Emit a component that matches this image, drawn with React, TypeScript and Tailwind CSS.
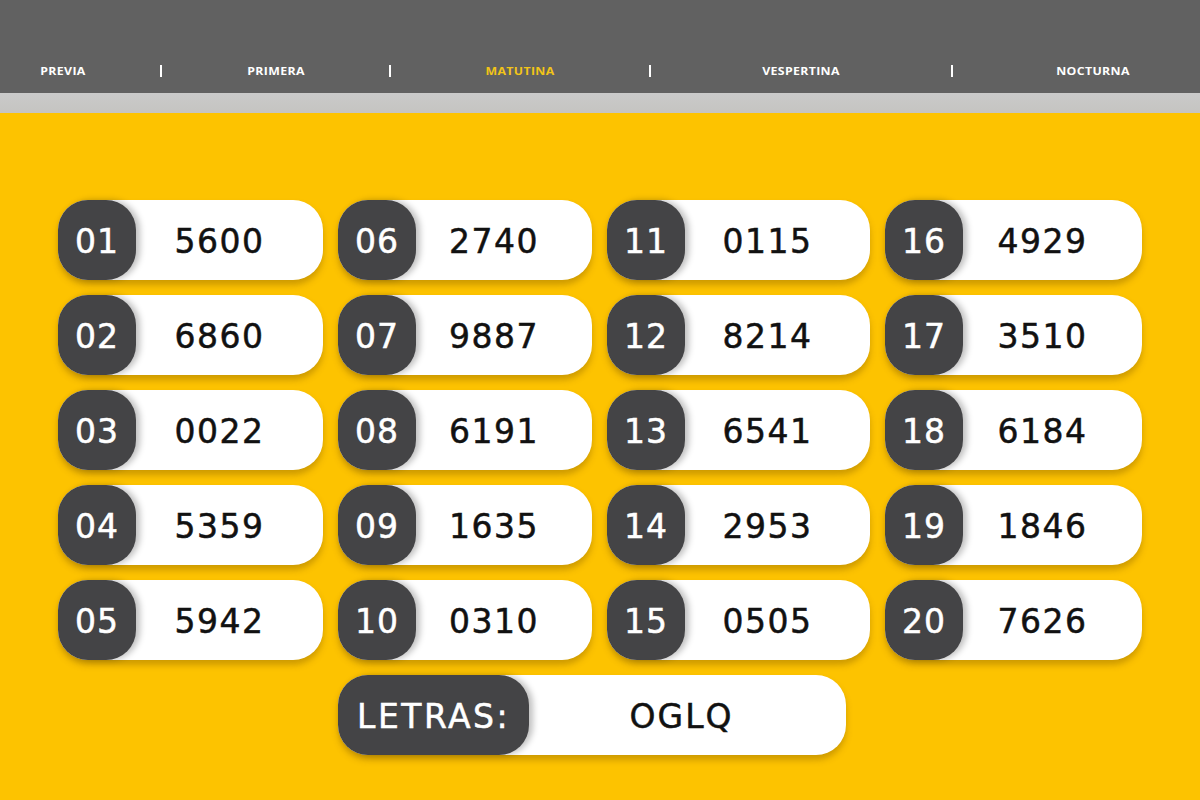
const results = [
  ["01", "5600"], ["06", "2740"], ["11", "0115"], ["16", "4929"],
  ["02", "6860"], ["07", "9887"], ["12", "8214"], ["17", "3510"],
  ["03", "0022"], ["08", "6191"], ["13", "6541"], ["18", "6184"],
  ["04", "5359"], ["09", "1635"], ["14", "2953"], ["19", "1846"],
  ["05", "5942"], ["10", "0310"], ["15", "0505"], ["20", "7626"],
];

const font = {fontFamily: '"DejaVu Sans", "Noto Sans", sans-serif'};

const Bar = ({w}: {w: string}) => (
  <div className={`${w} flex justify-center`}>
    <span className="h-[12px] w-[2px] bg-white" />
  </div>
);

const Tab = ({label, w, active}: {label: string; w: string; active?: boolean}) => (
  <div
    className={`${w} text-center text-[11px] font-bold ${active ? "text-[#f2c418]" : "text-white"}`}
    style={{fontFamily: '"Open Sans", sans-serif', letterSpacing: "0.3px", transform: "scaleX(1.12)"}}>
    {label}
  </div>
);

const Pill = ({pos, value}: {pos: string; value: string}) => (
  <div className="flex h-[80px] items-center rounded-[30px] bg-white shadow-[0_5px_6px_rgba(120,80,0,0.35)]">
    <div className="flex h-full items-center rounded-[30px] bg-[#444446] px-[17px] pt-[3px] text-[33px] tracking-[1px] text-white shadow-[4px_0_6px_rgba(0,0,0,0.25)] [-webkit-text-stroke:0.5px_#fff]">
      {pos}
    </div>
    <div className="flex-1 pr-5 pt-[3px] text-center text-[33px] tracking-[1.5px] text-[#111] [-webkit-text-stroke:0.5px_#111]">
      {value}
    </div>
  </div>
);

export default function App() {
  return (
    <div className="flex h-[800px] w-[1200px] flex-col overflow-hidden bg-[#fdc300]" style={font}>
      <div className="flex h-[93px] items-end bg-[#616161] pb-[14px]">
        <div className="flex w-full items-center">
          <Tab label="PREVIA" w="w-[126px]" />
          <Bar w="w-[70px]" />
          <Tab label="PRIMERA" w="w-[160px]" />
          <Bar w="w-[68px]" />
          <Tab label="MATUTINA" w="w-[192px]" active />
          <Bar w="w-[68px]" />
          <Tab label="VESPERTINA" w="w-[234px]" />
          <Bar w="w-[68px]" />
          <Tab label="NOCTURNA" w="w-[214px]" />
        </div>
      </div>
      <div className="h-[20px] bg-gradient-to-b from-[#cacaca] to-[#c5c4c1]" />

      <div className="ml-[58px] mt-[87px] grid grid-cols-[265px_254px_263px_257px] gap-[15px]">
        {results.map(([p, v]) => (
          <Pill key={p} pos={p} value={v} />
        ))}
      </div>

      <div className="mt-[15px] ml-[338px] w-[508px]">
        <div className="flex h-[80px] items-center rounded-[30px] bg-white shadow-[0_5px_6px_rgba(120,80,0,0.35)]">
          <div className="flex h-full items-center rounded-[30px] bg-[#444446] px-[19px] pt-[3px] text-[33px] tracking-[2.5px] text-white shadow-[4px_0_6px_rgba(0,0,0,0.25)] [-webkit-text-stroke:0.5px_#fff]">
            LETRAS:
          </div>
          <div className="flex-1 pr-3 pt-[3px] text-center text-[33px] tracking-[2px] text-[#111] [-webkit-text-stroke:0.5px_#111]">
            OGLQ
          </div>
        </div>
      </div>
    </div>
  );
}
